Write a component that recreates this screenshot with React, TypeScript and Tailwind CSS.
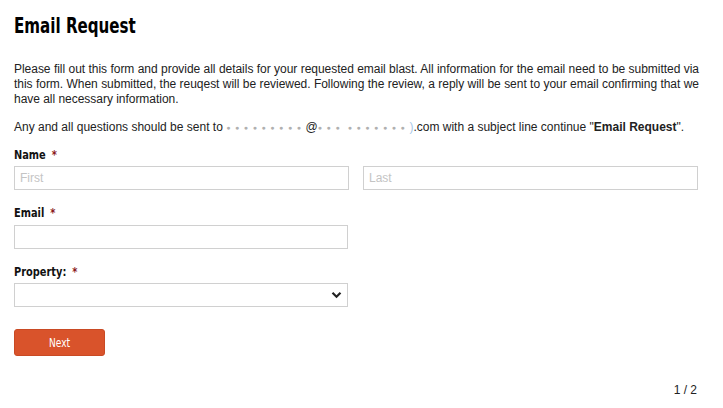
import React from "react";

const condensed = { fontFamily: '"DejaVu Sans Condensed", "Open Sans", sans-serif' };

function Label({ text }: { text: string }) {
  return (
    <div className="text-[13px] font-bold text-[#111] leading-[16px] mb-[3px]" style={condensed}>
      <span className="inline-block origin-left scale-x-[0.84]">
        {text} <span className="ml-[3px] text-[#8b1a1a]">*</span>
      </span>
    </div>
  );
}

function Dots({ n }: { n: number }) {
  return <span className="text-[#b0b0b0] text-[7px] tracking-[4.6px] align-middle">{"●".repeat(n)}</span>;
}

export default function App() {
  return (
    <div className="w-[723px] h-[408px] bg-white px-[14px] pt-[12px] text-[#222] relative" style={{ fontFamily: '"Liberation Sans", Arial, sans-serif' }}>
      <h1 className="text-[21px] font-bold text-black leading-[28px]" style={condensed}>
        <span className="inline-block origin-left scale-x-[0.8]">Email Request</span>
      </h1>
      <p className="mt-[22px] w-[685px] text-[12px] leading-[15px] text-justify tracking-[-0.03px]">
        Please fill out this form and provide all details for your requested email blast. All information for the email need to be submitted via
        this form. When submitted, the reuqest will be reviewed. Following the review, a reply will be sent to your email confirming that we
        have all necessary information.
      </p>
      <p className="mt-[13px] text-[12px] leading-[15px]">
        Any and all questions should be sent to <Dots n={9} />
        <span className="text-[#222]">@</span>
        <Dots n={3} /> <Dots n={7} />
        <span className="text-[#a8c8e8]">)</span>.com with a subject line continue "<b>Email Request</b>".
      </p>

      <div className="mt-[12px]">
        <Label text="Name" />
        <div className="flex gap-[14px]">
          <input
            placeholder="First"
            className="w-[335px] h-[24px] border border-[#d0d0d0] px-[5px] text-[12px] placeholder:text-[#c4c4c4] outline-none"
          />
          <input
            placeholder="Last"
            className="w-[335px] h-[24px] border border-[#d0d0d0] px-[5px] text-[12px] placeholder:text-[#c4c4c4] outline-none"
          />
        </div>
      </div>

      <div className="mt-[15px]">
        <Label text="Email" />
        <input className="w-[334px] h-[24px] border border-[#d0d0d0] px-[5px] text-[12px] outline-none" />
      </div>

      <div className="mt-[15px]">
        <Label text="Property:" />
        <div className="w-[334px] h-[24px] border border-[#d0d0d0] flex items-center justify-end pr-[5px]">
          <svg width="11" height="8" viewBox="0 0 11 8">
            <path d="M1.5 1.8 L5.5 5.8 L9.5 1.8" fill="none" stroke="#222" strokeWidth="2.2" />
          </svg>
        </div>
      </div>

      <button
        className="mt-[22px] w-[91px] h-[27px] bg-[#d9532b] rounded-[3px] text-white text-[12px] border border-[#c94a24]"
        style={condensed}
      >
        <span className="inline-block scale-x-[0.84]">Next</span>
      </button>

      <div className="absolute right-[26px] bottom-[9px] text-[12px] text-[#222]">1 / 2</div>
    </div>
  );
}
